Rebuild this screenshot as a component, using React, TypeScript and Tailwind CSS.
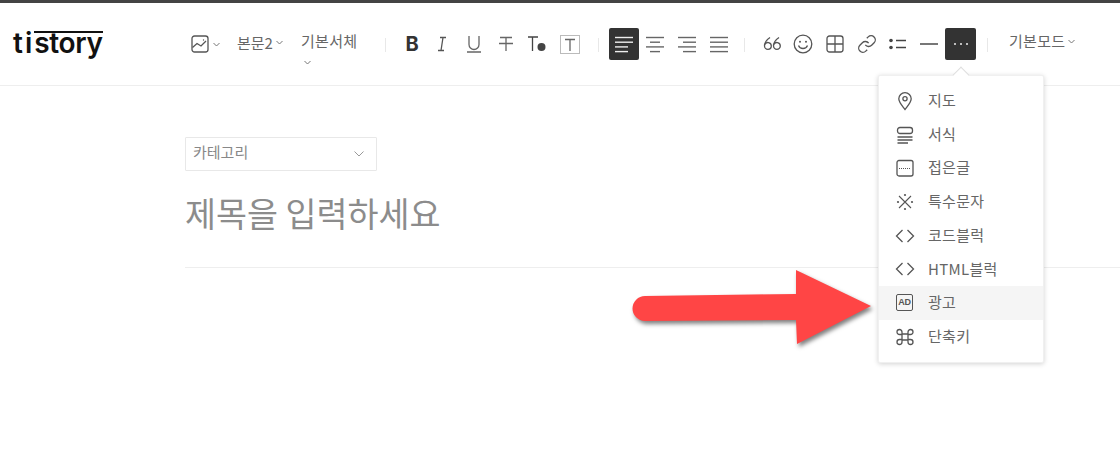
const S = ({ w = 20, h = 20, vb, children, c = "text-[#555]", sw = 1.3 }: any) => (
  <svg width={w} height={h} viewBox={vb || `0 0 ${w} ${h}`} fill="none" stroke="currentColor" strokeWidth={sw} className={`shrink-0 ${c}`}>
    {children}
  </svg>
);
const Chev = ({ c = "text-[#777]" }: { c?: string }) => (
  <svg width="7" height="5" viewBox="0 0 7 5" fill="none" stroke="currentColor" strokeWidth="1" className={`inline-block ${c}`}>
    <path d="M0.5 1 L3.5 4 L6.5 1" />
  </svg>
);
const Sep = ({ cls }: { cls: string }) => <div className={`w-px h-[14px] bg-[#e8e8e8] self-start mt-[10px] shrink-0 ${cls}`} />;
const Btn = ({ children, w = "w-[32px]", active = false }: any) => (
  <div className={`${w} h-[32px] flex items-center justify-center shrink-0 rounded-[2px] ${active ? "bg-[#333]" : ""}`}>{children}</div>
);
const Align = ({ lines, color = "text-[#666]" }: { lines: number[][]; color?: string }) => (
  <S w={18} h={17} c={color} sw={1.4}>
    {lines.map((l, i) => (
      <path key={i} d={`M${l[0]} ${1.5 + i * 4.7}H${l[1]}`} />
    ))}
  </S>
);

const items: [string, any, boolean?][] = [
  ["지도", <S w={18} h={20}><path d="M9 18.5C5.5 14 2.8 11.2 2.8 7.8a6.2 6.2 0 0 1 12.4 0C15.2 11.2 12.5 14 9 18.5Z" /><circle cx="9" cy="7.8" r="2.1" /></S>],
  ["서식", <S w={18} h={18}><rect x="1.5" y="1.5" width="15" height="6" rx="2.5" /><path d="M1.5 11H16.5M1.5 14H16.5M1.5 17H12" /></S>],
  ["접은글", <S w={18} h={18}><rect x="1" y="1.5" width="16" height="15.5" rx="2" /><path d="M3 9.5H15" strokeDasharray="1 1" strokeWidth="1" /></S>],
  ["특수문자", <S w={18} h={18}><path d="M3 3L15 15M15 3L3 15" strokeWidth="1.1" /><g fill="currentColor" stroke="none"><circle cx="9" cy="2" r="1.1" /><circle cx="9" cy="16" r="1.1" /><circle cx="2" cy="9" r="1.1" /><circle cx="16" cy="9" r="1.1" /></g></S>],
  ["코드블럭", <S w={20} h={16}><path d="M7.5 2L1.5 8L7.5 14M12.5 2L18.5 8L12.5 14" /></S>],
  ["HTML블럭", <S w={20} h={16}><path d="M7.5 2L1.5 8L7.5 14M12.5 2L18.5 8L12.5 14" /></S>],
  ["광고", <div className="w-[17px] h-[17px] border-[1.3px] border-[#555] rounded-[2px] flex items-center justify-center text-[9px] font-bold leading-none tracking-[-0.2px] text-[#555] [font-family:'Liberation_Sans',sans-serif]">AD</div>, true],
  ["단축키", <S w={18} h={18}><path d="M6 6H12V12H6ZM6 6V4a2.5 2.5 0 1 0-2.5 2.5H6M12 6V4a2.5 2.5 0 1 1 2.5 2.5H12M6 12v2a2.5 2.5 0 1 1-2.5-2.5H6M12 12v2a2.5 2.5 0 1 0 2.5-2.5H12" /></S>],
];

export default function App() {
  return (
    <div className="relative h-[466px] w-full overflow-hidden bg-white text-[#666] [font-family:'Noto_Sans_CJK_KR','Noto_Sans',sans-serif]">
      <div className="h-[3px] bg-[#444]" />
      <header className="h-[83px] border-b border-[#eee] flex items-start pt-[25px]">
        <div className="w-[191px] pl-[13px] shrink-0 h-[32px] flex items-start">
          <div className="text-[28px] font-semibold leading-[32px] text-[#111] [font-family:Inter,sans-serif] -mt-[1px] whitespace-nowrap">
            <span className="tracking-[2px]">ti</span>
            <span className="border-t-[2.5px] border-[#111] inline-block leading-[21px] h-[26px] tracking-[-0.3px]">story</span>
          </div>
        </div>
        <div className="flex items-center h-[32px]">
          <S w={18} h={18}><rect x="1" y="1" width="16" height="16" rx="2.5" /><path d="M1.5 12.5L6 8.5L10 11L15 6" /><circle cx="12.5" cy="5" r=".7" fill="currentColor" stroke="none" /></S>
          <div className="ml-[4px] w-[24px] flex"><Chev /></div>
          <div className="flex items-center gap-[3px] text-[15px] leading-[32px] w-[64px] whitespace-nowrap -mt-[3px]">본문2<Chev /></div>
        </div>
        <div className="w-[60px] text-[15px] leading-[32px] h-[32px] tracking-[0.3px] -mt-[3px]">기본서체 <span className="block leading-[1px] pl-[3px] mt-[3px]"><Chev /></span></div>
        <Sep cls="ml-[24px]" />
        <div className="flex ml-[10px]">
          <Btn><span className="text-[20px] font-bold text-[#333] [font-family:Inter,sans-serif]">B</span></Btn>
          <Btn w="w-[27px]"><S w={12} h={16}><path d="M4 1.5H10M2 14.5H8M7 1.5L5 14.5" /></S></Btn>
          <Btn w="w-[37px]"><S w={16} h={18} c="text-[#666]"><path d="M3 1V9.5a5 5 0 0 0 10 0V1M1 17H15" /></S></Btn>
          <Btn w="w-[27px]"><S w={16} h={16} c="text-[#666]"><path d="M2 1.5H14M8 1.5V15M1 7.5H15" /></S></Btn>
          <Btn w="w-[36px]"><svg width="20" height="18" viewBox="0 0 20 18" className="text-[#444]"><path d="M1 2H11M5.5 2V16" stroke="currentColor" strokeWidth="1.3" fill="none" /><circle cx="14.5" cy="12" r="4" fill="currentColor" /></svg></Btn>
          <Btn w="w-[29px]"><div className="w-[20px] h-[19px] border border-[#bbb] flex items-center justify-center"><S w={12} h={13} c="text-[#666]"><path d="M1 1.5H11M6 1.5V13" /></S></div></Btn>
        </div>
        <Sep cls="ml-[14px]" />
        <div className="flex ml-[10px]">
          <Btn w="w-[30px]" active><Align color="text-[#eee]" lines={[[0, 18], [0, 18], [0, 13], [0, 13]]} /></Btn>
          <Btn><Align lines={[[0, 18], [4, 14], [0, 18], [4, 14]]} /></Btn>
          <Btn><Align lines={[[0, 18], [5, 18], [0, 18], [5, 18]]} /></Btn>
          <Btn w="w-[31px]"><Align lines={[[0, 18], [0, 18], [0, 18], [0, 18]]} /></Btn>
        </div>
        <Sep cls="ml-[10px]" />
        <div className="flex ml-[11px]">
          <Btn w="w-[31px]">
            <S w={18} h={16}>
              <path d="M7 1.5C4 3.5 1.5 6.5 1.5 10a3.4 3.4 0 1 0 6.8 0a3.4 3.4 0 0 0-6.6-1.2" />
              <path d="M16 1.5C13 3.5 10.5 6.5 10.5 10a3.4 3.4 0 1 0 6.8 0a3.4 3.4 0 0 0-6.6-1.2" />
            </S>
          </Btn>
          <Btn w="w-[32px]"><S w={20} h={20}><circle cx="10" cy="10" r="8.8" /><path d="M5.5 11.5C7 15.5 13 15.5 14.5 11.5" /><circle cx="7" cy="7.8" r="1" fill="currentColor" stroke="none" /><circle cx="13" cy="7.8" r="1" fill="currentColor" stroke="none" /></S></Btn>
          <Btn w="w-[32px]"><S w={18} h={18}><rect x="1" y="1" width="16" height="16" rx="2.5" /><path d="M9 1V17M1 9H17" /></S></Btn>
          <Btn w="w-[31px]"><S w={20} h={20} vb="0 0 24 24" sw={1.6}><path d="M10 13a5 5 0 0 0 7.54.54l3-3a5 5 0 0 0-7.07-7.07l-1.72 1.71" /><path d="M14 11a5 5 0 0 0-7.54-.54l-3 3a5 5 0 0 0 7.07 7.07l1.71-1.71" /></S></Btn>
          <Btn w="w-[31px]"><svg width="18" height="12" viewBox="0 0 18 12" className="text-[#444]"><circle cx="2" cy="2.5" r="1.8" fill="currentColor" /><circle cx="2" cy="9.5" r="1.8" fill="currentColor" /><path d="M7 2.5H17M7 9.5H17" stroke="currentColor" strokeWidth="1.3" /></svg></Btn>
          <Btn w="w-[32px]"><div className="w-[18px] h-[1.5px] bg-[#777]" /></Btn>
          <Btn w="w-[31px]" active><svg width="16" height="4" viewBox="0 0 16 4" fill="#eee"><circle cx="2" cy="2" r="1" /><circle cx="8" cy="2" r="1" /><circle cx="14" cy="2" r="1" /></svg></Btn>
        </div>
        <Sep cls="ml-[11px]" />
        <div className="ml-[21px] flex items-center gap-[3px] h-[32px] text-[15px] tracking-[0.3px] whitespace-nowrap -mt-[3px]">기본모드<Chev /></div>
      </header>

      <main className="pl-[185px] pt-[51px]">
        <div className="w-[192px] h-[34px] border border-[#e8e8e8] rounded-[1px] flex items-center justify-between pl-[7px] pr-[12px] text-[15px] text-[#888]">
          <span className="-mt-[3px]">카테고리</span>
          <svg width="10" height="6" viewBox="0 0 10 6" fill="none" stroke="#999" strokeWidth="1"><path d="M0.5 0.5L5 5L9.5 0.5" /></svg>
        </div>
        <h1 className="mt-[18px] h-[48px] text-[33.7px] leading-[48px] font-normal text-[#8c8c8c] whitespace-nowrap">제목을 입력하세요</h1>
        <div className="mt-[30px] h-px bg-[#eee]" />
      </main>

      {/* caret + dropdown menu */}
      <div className="absolute left-[878px] top-[75px] w-[166px] h-[288px] bg-white rounded-[2px] border border-[#f0f0f0] shadow-[0_1px_5px_rgba(0,0,0,0.18)] pt-[8px]">
        <div className="absolute left-[76px] -top-[7px] w-[12px] h-[12px] rotate-45 bg-white border-l border-t border-[#dedede]" />
        {items.map(([label, icon, hover]) => (
          <div key={label} className={`h-[33.7px] flex items-center text-[15px] tracking-[0.3px] text-[#666] ${hover ? "bg-[#f5f5f5]" : ""}`}>
            <div className="w-[49px] flex justify-center pl-[2px] shrink-0">{icon}</div>
            <span className="-mt-[1px]">{label}</span>
          </div>
        ))}
      </div>

      {/* red annotation arrow */}
      <svg className="absolute left-[625px] top-[262px] drop-shadow-[2px_3px_2px_rgba(0,0,0,0.5)]" width="255" height="92" viewBox="625 262 255 92">
        <path d="M645 296L796 294L796 270L871 306L797 344L796 320L645 321A12.5 12.5 0 0 1 645 296Z" fill="#ff4545" />
      </svg>
    </div>
  );
}
